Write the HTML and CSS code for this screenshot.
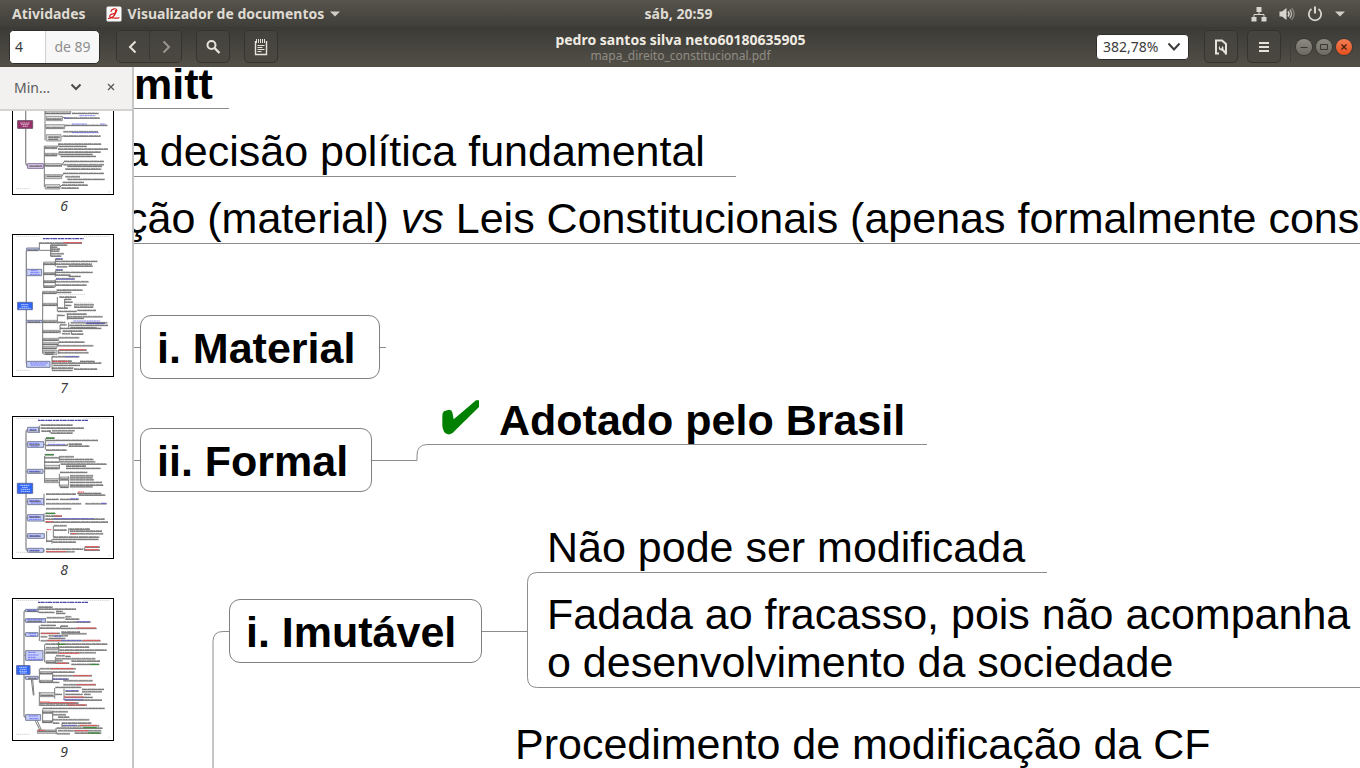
FILE: index.html
```html
<!DOCTYPE html>
<html lang="pt-BR">
<head>
<meta charset="utf-8">
<title>mapa_direito_constitucional.pdf</title>
<link rel="stylesheet" href="styles.css">
</head>
<body>
<nav class="panel">
  <div class="panel-start">
    <button class="panel-item">Atividades</button>
    <button class="panel-item app-menu">
      <svg class="app-icon" width="16" height="16" viewBox="0 0 16 16"><rect x=".5" y=".5" width="15" height="15" rx="1.5" fill="#fafafa"/><path d="M5 5.500C5.500 2.500 10.500 1.800 10.800 4.200c.2 2.300-3.600 4.200-5.300 3.900M5.500 8.100C3.500 8.800 3 11.500 5 11.500c2.500 0 5.500-4 4.500-7M2.500 12.500c3-2 6 .8 10.500-.8" fill="none" stroke="#d41f1f" stroke-width="1.200" stroke-linecap="round"/></svg>
      <span>Visualizador de documentos</span>
      <svg width="10" height="6" viewBox="0 0 10 6"><path d="M0 .5h10L5 5.500z" fill="#d0cdc6"/></svg>
    </button>
  </div>
  <button class="panel-item">sáb, 20:59</button>
  <div class="panel-end">
    <svg width="16" height="16" viewBox="0 0 16 16"><path d="M5.500 1h5v5h-5zM.5 11h5v4.500h-5zM10.500 11h5v4.500h-5z" fill="#d8d5cf"/><path d="M8 6v2.500M3 11V8.500h10V11" fill="none" stroke="#d8d5cf"/></svg>
    <svg width="16" height="16" viewBox="0 0 16 16"><path d="M.5 5.500H3L7.500 2v12L3 10.500H.5z" fill="#d8d5cf"/><path d="M9 5.500c1.300 1.500 1.300 3.500 0 5" fill="none" stroke="#d8d5cf" stroke-width="1.500"/><path d="M10.800 3.800c2.200 2.500 2.200 6 0 8.400" fill="none" stroke="#bab7b0" stroke-width="1.500"/><path d="M12.600 2c3.200 3.500 3.200 8.500 0 12" fill="none" stroke="#7f7c75" stroke-width="1.500"/></svg>
    <svg width="16" height="16" viewBox="0 0 16 16"><path d="M4.500 3a6.200 6.200 0 1 0 7 0" fill="none" stroke="#d8d5cf" stroke-width="1.800"/><path d="M8 .5v7" stroke="#d8d5cf" stroke-width="2"/></svg>
    <svg width="10" height="6" viewBox="0 0 10 6"><path d="M0 .5h10L5 5.500z" fill="#d0cdc6"/></svg>
  </div>
</nav>

<header class="toolbar">
  <div class="tools">
    <label class="page-box"><input class="page-input" type="text" value="4" aria-label="Página"><span class="page-total">de 89</span></label>
    <div class="pair">
      <button class="tool" aria-label="Página anterior"><svg width="16" height="16" viewBox="0 0 16 16"><path d="M10.500 2.500 5 8l5.500 5.500" fill="none" stroke="#e6e2da" stroke-width="2"/></svg></button>
      <button class="tool" aria-label="Próxima página"><svg width="16" height="16" viewBox="0 0 16 16"><path d="M5.500 2.500 11 8l-5.500 5.500" fill="none" stroke="#98958d" stroke-width="2"/></svg></button>
    </div>
    <button class="tool solo" aria-label="Localizar"><svg width="16" height="16" viewBox="0 0 16 16"><circle cx="6.500" cy="6" r="4" fill="none" stroke="#e6e2da" stroke-width="2"/><path d="m9.500 9 5 5" stroke="#e6e2da" stroke-width="2.400"/></svg></button>
    <button class="tool solo" aria-label="Anotações"><svg width="16" height="18" viewBox="0 0 16 18"><path d="M2.500 3v13.500h11V3" fill="none" stroke="#e6e2da" stroke-width="1.400"/><path d="M3.500 1v4M5.500 1v4M7.500 1v4M9.500 1v4M11.500 1v4" stroke="#e6e2da"/><path d="M4.500 7.500h7M4.500 9.500h5M4.500 11.500h7M4.500 13.500h4" stroke="#e6e2da"/></svg></button>
  </div>
  <div class="heading">
    <h1 class="title">pedro santos silva neto60180635905</h1>
    <p class="subtitle">mapa_direito_constitucional.pdf</p>
  </div>
  <div class="tools tools-end">
    <div class="zoom-box">
      <input class="zoom-input" type="text" value="382,78%" aria-label="Zoom">
      <button class="zoom-open" aria-label="Opções de zoom"><svg width="14" height="10" viewBox="0 0 14 10"><path d="m1.500 1.500 5.500 6 5.500-6" fill="none" stroke="#3c3b37" stroke-width="2"/></svg></button>
    </div>
    <button class="tool solo" aria-label="Propriedades"><svg width="16" height="18" viewBox="0 0 16 18"><path d="M6 15.500H3V2.500h6L13 6v9.500h-1" fill="none" stroke="#e6e2da" stroke-width="2"/><path d="M6.500 8a3 3 0 0 0 .8 4.300l1.600.3 3.600 4 1.500-1.500-3.600-4 .1-1.600-1.500-1.700-.2 2.400-1.500.2z" fill="#e6e2da"/></svg></button>
    <button class="tool solo menu-button" aria-label="Menu"><svg width="12" height="12" viewBox="0 0 12 12"><path d="M1 2h10M1 6h10M1 10h10" stroke="#e6e2da" stroke-width="2"/></svg></button>
    <div class="window-buttons">
      <button class="win" aria-label="Minimizar"><svg width="16" height="16" viewBox="0 0 16 16"><path d="M4.500 8.500h7" stroke="#3a3935"/></svg></button>
      <button class="win" aria-label="Maximizar"><svg width="16" height="16" viewBox="0 0 16 16"><path d="M4.500 5.500h7v5h-7z" fill="none" stroke="#3a3935"/></svg></button>
      <button class="win close" aria-label="Fechar"><svg width="16" height="16" viewBox="0 0 16 16"><path d="m5.500 5.500 5 5m0-5-5 5" stroke="#46200f" stroke-width="1.300"/></svg></button>
    </div>
  </div>
</header>

<main class="workspace">
  <aside class="sidebar">
    <div class="side-head">
      <button class="side-select"><span>Min…</span><svg width="12" height="8" viewBox="0 0 12 8"><path d="m1.500 1.500 4.500 4.500 4.500-4.500" fill="none" stroke="#4a4a4a" stroke-width="2"/></svg></button>
      <button class="side-close" aria-label="Fechar painel"><svg width="8" height="8" viewBox="0 0 8 8"><path d="m1 1 6 6m0-6-6 6" stroke="#555" stroke-width="1.200"/></svg></button>
    </div>
    <div class="thumbs">
      <ol class="thumb-list">
        <li class="thumb">
          <svg class="sheet" viewBox="36 -43 306 429">
            <path class="trunk" d="M77 0V285q0 14 8 14"/>
            <path class="branch" d="M135 0V222M133 238V362M130 299h5M186 157l6-5M192 182l6-5M184 212l6-4M170 242l8-8M172 264l6-6M186 296l6-10M184 332l8-12M180 362l6-6"/>
            <path class="node" d="M136 134h76v8h-76zM139 150h48v13h-48zM137 175h57v12h-57zM139 205h44v19h-44zM135 239h36v8h-36zM135 261h36v8h-36zM135 292h50v7h-50zM135 325h50v12h-50zM136 355h44v13h-44z"/>
            <path class="violet" d="M83 292h47v14H83z"/><path class="plum" d="M53 163h45v23H53z"/><path class="root-text" d="M60 170h30M63 175h24M68 180h15"/>
            <defs><path id="r6" d="M136 142h76M216 142h80M192 156h108M140 159h44M196 178h126M139 185h52M190 197h104M190 210h112M145 213h34M145 220h30M174 234h130M176 241h84M174 249h150M136 245h34M176 258h126M176 265h102M182 271h106M136 267h34M192 286h120M190 296h122M202 301h104M136 299h50M196 309h108M190 322h122M196 332h44M202 340h112M140 331h42M188 349h64M186 357h78M184 366h52M140 364h38M88 300h38"/></defs>
            <use href="#r6" class="rule"/><use href="#r6" class="ink"/>
            <path class="blue" d="M238 148h48M192 155h18M216 173h44M300 173h16M216 199h80"/>
            <path class="faint" d="M48 367h40M326 377h4"/>
          </svg><span class="thumb-no">6</span></li>
        <li class="thumb">
          <svg class="sheet" viewBox="36 27 306 429">
            <path class="trunk" d="M84 73q-5 0-5 8V410q0 8 6 8M79 142h5M79 290h10"/>
            <path class="branch" d="M118 53v22M152 60v34M118 76h34M131 115v69M166 102v22M166 138v17M166 163v22M128 202v184M172 216v44M194 222v30M172 268v28M202 270v14M180 300v26M176 375v12M156 394v40M170 239h4M166 290h6M206 292v16M176 320h6M214 320v8"/>
            <path class="node" d="M131 111h34v8h-34zM131 143h34v6h-34zM131 167h34v6h-34zM131 182h34v5h-34zM128 199h42v7h-42zM128 235h42v7h-42zM128 286h42v7h-42zM128 316h48v7h-48zM128 340h48v7h-48zM128 353h48v6h-48zM128 365h42v6h-42zM131 376h40v12h-40z"/>
            <path class="lilac" d="M80 69h36v8H80zM80 133h45v19H80zM80 286h46v7H80zM80 409h70v18H80z"/><path class="royal" d="M53 232h44v22H53z"/><path class="root-text" d="M63 239h22M65 245h20M58 250h34"/>
            <defs><path id="r7" d="M118 55h128M152 61h50M152 67h20M152 73h28M152 79h26M152 87h40M152 94h32M166 103h22M166 110h126M166 118h110M170 126h32M206 124h72M166 136h22M166 143h112M166 151h46M206 155h36M168 162h56M166 171h100M168 181h92M131 118h34M131 148h34M131 172h34M131 187h30M170 196h78M170 203h44M178 217h50M194 224h20M194 232h24M222 240h60M196 242h18M222 247h58M174 250h30M174 260h56M232 257h56M174 272h20M200 268h60M202 276h106M202 281h50M174 293h22M212 294h110M208 302h116M212 309h78M180 300h20M180 311h124M188 319h60M186 327h24M214 328h36M176 339h62M176 352h78M170 363h110M176 376h84M176 384h90M156 396h82M156 409h60M156 415h148M160 422h80M156 430h64M156 437h62M222 433h70M128 205h40M128 241h42M128 292h40M128 322h48M128 346h46M128 359h46M128 371h40M83 76h30M84 292h36M134 383h32M136 388h24M240 410h44M260 296h54"/></defs>
            <use href="#r7" class="rule"/><use href="#r7" class="ink"/>
            <path class="heading-ink" d="M129 41h122"/>
            <path class="blue" d="M168 101h20M168 134h20M168 163h56M220 288h80M258 295h56M196 395h40M92 136h20M92 142h26M90 148h30M90 414h54M92 420h46"/>
            <path class="red" d="M190 53h56M178 374h80M158 409h48"/>
            <path class="faint" d="M48 34h70M252 34h76M48 436h40M174 208h84M222 234h56"/>
          </svg><span class="thumb-no">7</span></li>
        <li class="thumb">
          <svg class="sheet" viewBox="36 33 306 429">
            <path class="trunk" d="M84 74q-6 0-6 10V428q0 8 6 8M78 118h6M78 200h6M78 290h6M78 339h6M78 393h6"/>
            <path class="branch" d="M118 62v22M150 76v8M136 100v34M132 118h4M202 116v6M134 153v80M130 200h4M178 155v12M178 178v14M178 206v38M206 214v26M132 266v36M132 325v26M160 362v34M140 378v34M206 370v16M156 402v14M132 432v10M254 428v10"/>
            <path class="node" d="M134 181h44v11h-44zM134 221h44v12h-44zM180 216h26v10h-26zM180 240h26v8h-26z"/>
            <path class="lilac" d="M83 67h33v15H83zM83 110h48v17H83zM83 193h46v12H83zM83 281h48v18H83zM83 329h48v19H83zM83 386h50v14H83zM83 430h47v12H83z"/><path class="royal" d="M52 235h46v30H52z"/><path class="root-text" d="M60 241h28M66 247h18M62 253h28M62 259h28"/>
            <defs><path id="r8" d="M122 61h96M122 70h130M124 79h28M156 78h68M152 85h66M138 100h26M138 107h156M138 122h64M206 118h40M206 124h62M138 136h62M134 150h28M134 159h44M178 156h44M178 164h102M134 172h44M178 171h108M182 178h138M198 184h60M198 191h104M180 203h82M210 213h70M210 219h68M210 225h72M210 233h96M210 241h100M210 246h68M134 190h42M136 228h38M182 223h22M182 247h22M138 268h90M232 266h72M236 271h80M138 284h38M180 284h56M138 297h106M256 297h64M138 312h76M136 326h30M136 334h50M136 343h178M136 352h188M162 363h38M208 373h62M162 376h38M210 379h96M210 387h100M160 397h138M158 404h138M158 412h70M140 409h16M138 433h112M254 427h46M254 436h46M138 441h86M88 77h22M88 120h32M88 201h34M88 290h34M88 337h34M88 394h34M88 438h30"/></defs>
            <use href="#r8" class="rule"/><use href="#r8" class="ink"/>
            <path class="heading-ink" d="M114 46h150"/>
            <path class="blue" d="M90 73h18M88 115h30M92 123h24M88 199h30M88 287h30M92 294h34M88 335h30M88 343h36M88 393h30M90 436h30M144 118h52M212 281h24M304 295h16M162 341h120"/>
            <path class="red" d="M234 261h18M164 333h22M138 350h20M140 374h14M214 386h14M138 440h60M256 425h40M256 434h40"/>
            <path class="green" d="M138 99h24M136 149h24M138 325h28"/>
            <path class="faint" d="M48 40h70M252 40h76M48 442h40M138 112h30M326 451h4"/>
          </svg><span class="thumb-no">8</span></li>
        <li class="thumb">
          <svg class="sheet" viewBox="36 24 306 429">
            <path class="trunk" d="M78 61q-6 0-6 8V376q0 6 6 6M72 91h6M72 133h6M72 196h6M72 262h6"/><path class="branch" d="M94 268l6 48M98 268l4 48M104 388l16 34M110 388l14 32"/>
            <path class="branch" d="M114 50v18M136 84v14M118 107v46M182 108v8M134 163v54M176 156v36M166 200v22M118 236v42M158 246v32M118 306v42M164 294v32M192 296v34M128 358v40M158 368v28M186 398v14M168 414v18M114 262h4"/>
            <path class="node" d="M134 178h42v12h-42zM138 212h28v8h-28zM120 245h36v7h-36zM120 271h36v7h-36zM120 308h44v12h-44zM128 363h30v6h-30zM128 392h28v6h-28zM112 420h58v10h-58z"/>
            <path class="lilac" d="M77 58h37v7H77zM77 86h59v11H77zM77 128h37v11H77zM77 182h52v29H77zM77 259h37v9H77zM77 374h45v17H77z"/><path class="royal" d="M50 227h40v26H50z"/><path class="root-text" d="M57 232h24M60 238h20M58 244h24M60 249h20"/>
            <defs><path id="r9" d="M116 52h42M116 58h112M168 65h20M116 68h48M168 71h28M140 84h54M196 81h18M196 88h42M140 97h132M122 107h46M182 109h22M120 115h60M182 116h108M122 131h58M184 127h56M184 132h76M122 141h20M146 138h58M146 146h50M122 153h180M136 163h62M198 163h124M138 174h40M178 172h90M178 181h142M178 189h110M138 188h34M168 198h26M196 200h16M168 207h118M138 218h28M168 213h20M214 214h86M168 220h40M214 224h84M120 237h108M120 251h36M158 247h66M158 258h118M158 268h48M190 273h88M120 277h36M158 278h20M190 285h98M166 293h78M246 299h66M196 304h40M246 306h60M196 314h52M252 314h20M194 323h84M194 331h112M122 317h38M166 314h20M120 340h116M120 346h140M128 356h186M128 369h30M158 366h46M158 375h40M174 382h34M158 390h110M128 397h28M158 400h20M186 400h88M186 408h112M170 415h138M114 425h54M174 423h130M170 432h40M224 430h80M82 64h28M82 95h44M84 266h26"/></defs>
            <use href="#r9" class="rule"/><use href="#r9" class="ink"/>
            <path class="heading-ink" d="M114 37h150"/>
            <path class="blue" d="M82 61h26M82 89h48M86 131h22M90 137h18M84 187h22M84 195h32M84 202h24M84 208h42M86 378h28M88 386h28M230 95h40M184 151h60M158 267h48M198 302h38M190 329h60M190 406h40M162 139h24"/>
            <path class="red" d="M230 114h58M124 130h50M142 151h42M250 151h50M178 190h60M172 220h30M154 236h66M220 257h52M230 284h56M192 321h60M148 338h80M204 345h56M240 406h50M114 421h20M226 422h38M120 336h30"/>
            <path class="green" d="M172 163h24M272 223h24M250 413h40M264 429h36"/>
            <path class="faint" d="M48 31h70M252 31h76M48 433h40M174 417h34M326 442h4"/>
          </svg><span class="thumb-no">9</span></li>
      </ol>
    </div>
  </aside>

  <section class="canvas" aria-label="Página 4">
    <svg class="links" width="100%" height="100%">
      <g transform="translate(-134 -67)" fill="none" stroke="#8c8c8c" stroke-width="1">
        <path d="M134 108.500h95M134 176.500h602M134 243.500h2400M134 347.500h7M379 347.500h7M134 460.500h7M371 460.500h46V455q0-10 10-10.500h500M481 631.500h46M229 631.500h-6q-10 0-10 10V1000M1047 572.500H537.500q-10 0-10 10V677.500q0 10 10 10H2500"/>
      </g>
    </svg>
    <strong class="topic t-schmitt">mitt</strong>
    <span class="topic t-decisao">a decisão política fundamental</span>
    <span class="topic t-leis">ção (material) <em>vs</em> Leis Constitucionais (apenas formalmente const</span>
    <strong class="topic boxed t-material">i. Material</strong>
    <strong class="topic boxed t-formal">ii. Formal</strong>
    <svg class="check" width="38" height="35" viewBox="968 300 114 105"><path d="M969 348q0-11 5-14 6-3 16-5 7 1 9 8l4 21 47-40 20-17q5-1 9 0v20l-74 73q-5 8-14 9-10 1-16-6-5-8-6-20z" fill="#008000"/></svg>
    <strong class="topic t-adotado">Adotado pelo Brasil</strong>
    <span class="topic t-nao">Não pode ser modificada</span>
    <strong class="topic boxed t-imutavel">i. Imutável</strong>
    <span class="topic t-fadada">Fadada ao fracasso, pois não acompanha<br>o desenvolvimento da sociedade</span>
    <span class="topic t-proc">Procedimento de modificação da CF</span>
  </section>
</main>
</body>
</html>
```
FILE: styles.css
```css
* { box-sizing: border-box; }

body {
  margin: 0;
  height: 100vh;
  display: flex;
  flex-direction: column;
  overflow: hidden;
  background: #fff;
  font-family: "Noto Sans", "Open Sans", sans-serif;
  font-size: 14px;
}

button, input {
  font: inherit;
  color: inherit;
  margin: 0;
  padding: 0;
  border: 0;
  background: none;
}

svg { display: block; flex: none; }

/* System panel */
.panel {
  flex: none;
  height: 27px;
  display: grid;
  grid-template-columns: 1fr auto 1fr;
  align-items: center;
  padding: 0 15px 0 12px;
  background: linear-gradient(#57544c, #3f3e39);
  color: #dfdbd2;
  font-weight: 700;
}
.panel-start, .panel-end { display: flex; align-items: center; }
.panel-start { gap: 20px; }
.panel-end { justify-content: flex-end; gap: 12px; }
.panel-item { white-space: nowrap; line-height: 26px; }
.app-menu { display: flex; align-items: center; gap: 6px; }

/* Window toolbar */
.toolbar {
  flex: none;
  height: 40px;
  display: grid;
  grid-template-columns: 1fr auto 1fr;
  align-items: center;
  padding: 0 8px 0 9px;
  background: linear-gradient(#3b3a36, #524f47);
  border-bottom: 1px solid #504b45;
}
.tools { display: flex; align-items: center; gap: 14px; }
.tools-end { justify-content: flex-end; gap: 9px; }
.page-box {
  display: flex;
  width: 91px;
  height: 34px;
  border: 1px solid #2f2e2a;
  border-radius: 5px;
  background: #f7f7f7;
  overflow: hidden;
}
.page-input {
  width: 36px;
  padding-left: 5px;
  background: #fff;
  border-right: 1px solid #d0d0d0;
  color: #3c3c3c;
}
.page-total { flex: 1; text-align: center; line-height: 32px; color: #8e8e8e; }
.pair { display: flex; margin-left: 2px; border: 1px solid #34332f; border-radius: 5px; }
.tool {
  width: 32px;
  height: 31px;
  display: flex;
  align-items: center;
  justify-content: center;
  background: linear-gradient(#45433e, #4b4842);
  border-radius: 4px;
}
.pair .tool + .tool { border-left: 1px solid #3a3935; }
.solo { width: 34px; height: 33px; border: 1px solid #34332f; border-radius: 5px; }
.heading { text-align: center; }
.title { margin: 0; font-size: 14px; line-height: 18px; font-weight: 700; color: #efebe2; }
.subtitle { margin: 0; font-size: 12px; line-height: 14px; color: #8f8c84; }
.zoom-box {
  display: flex;
  align-items: center;
  width: 93px;
  height: 26px;
  margin-right: 6px;
  border: 1px solid #2f2e2a;
  border-radius: 4px;
  background: #fff;
  color: #3c3c3c;
}
.zoom-input { width: 64px; padding-left: 6px; }
.zoom-open { padding: 4px 6px; }
.window-buttons {
  display: flex;
  gap: 4px;
  padding-left: 5px;
  border-left: 1px solid #403e39;
  height: 30px;
  align-items: center;
}
.win {
  width: 16px;
  height: 16px;
  border-radius: 50%;
  background: linear-gradient(#8d8a82, #6c6962);
  box-shadow: 0 0 0 1px #3a3935;
}
.close { background: linear-gradient(#f47b52, #e4511f); }

/* Sidebar */
.workspace { flex: 1; min-height: 0; display: flex; }
.sidebar {
  flex: none;
  width: 134px;
  display: flex;
  flex-direction: column;
  border-right: 2px solid #c6c6c6;
}
.side-head {
  flex: none;
  height: 44px;
  display: flex;
  align-items: center;
  justify-content: space-between;
  padding: 0 17px 2px 14px;
  background: #f2f1f0;
  border-bottom: 2px solid #d5d3d1;
  color: #5a5a5a;
}
.side-select { display: flex; align-items: center; gap: 20px; }
.thumbs { flex: 1; min-height: 0; overflow: hidden; }
.thumb-list { list-style: none; margin: -59px 0 0; padding: 0 0 0 12px; }
.thumb { width: 102px; height: 182px; }
.sheet { width: 102px; height: 143px; outline: 1px solid #000; outline-offset: -1px; }
.thumb-no {
  display: block;
  padding-left: 2px;
  text-align: center;
  line-height: 22px;
  font-style: italic;
  color: #3c3c3c;
}

.sheet path, .sheet use { fill: none; }
.sheet .trunk { stroke: #8e8e8e; stroke-width: 4; }
.sheet .branch { stroke: #7c7c7c; stroke-width: 3; }
.sheet .node { fill: #ddd; stroke: #6e6e6e; stroke-width: 2; }
.sheet .lilac { fill: #c6cffb; stroke: #777d9c; stroke-width: 3; }
.sheet .royal { fill: #2f66fa; stroke: #5c6aa8; stroke-width: 3; }
.sheet .plum { fill: #98306c; stroke: #74576a; stroke-width: 3; }
.sheet .violet { fill: #e2cdf5; stroke: #84709a; stroke-width: 3; }
.rule { stroke: #707070; stroke-width: 3; }
.ink { stroke: #666; stroke-width: 2; stroke-dasharray: 9 1 5 2 12 1; transform: translateY(-2px); }
.sheet .blue { stroke: #4a4af0; stroke-width: 2; stroke-dasharray: 8 1 5 1; }
.sheet .red { stroke: #f04c4c; stroke-width: 3; stroke-dasharray: 8 1 5 1; }
.sheet .green { stroke: #2c8c2c; stroke-width: 3; }
.sheet .heading-ink { stroke: #4a4aa6; stroke-width: 4; stroke-dasharray: 7 1 12 2; }
.sheet .root-text { stroke: #fff; stroke-width: 2; stroke-dasharray: 5 1; }
.sheet .faint { stroke: #c0c0c0; stroke-width: 2; stroke-dasharray: 4 2; }

/* Mind map page */
.canvas {
  flex: 1;
  min-width: 0;
  position: relative;
  overflow: hidden;
  background: #fff;
  color: #000;
  font-family: "Liberation Sans", Arial, sans-serif;
  font-size: 43px;
  line-height: 48px;
}
.links { position: absolute; left: 0; top: 0; }
.topic { position: absolute; white-space: nowrap; }
.boxed {
  height: 64px;
  padding: 8px 0 0 16px;
  border: 1px solid #808080;
  border-radius: 11px;
  background: #fff;
}
.t-schmitt { left: 0; top: -7px; }
.t-decisao { left: -10px; top: 60px; }
.t-leis { left: -8px; top: 127px; }
.t-material { left: 6px; top: 248px; width: 240px; }
.t-formal { left: 6px; top: 361px; width: 232px; }
.check { position: absolute; left: 308px; top: 333px; }
.t-adotado { left: 365px; top: 329px; }
.t-nao { left: 413px; top: 456px; }
.t-imutavel { left: 95px; top: 532px; width: 253px; }
.t-fadada { left: 413px; top: 523px; }
.t-proc { left: 381px; top: 653px; }
```
